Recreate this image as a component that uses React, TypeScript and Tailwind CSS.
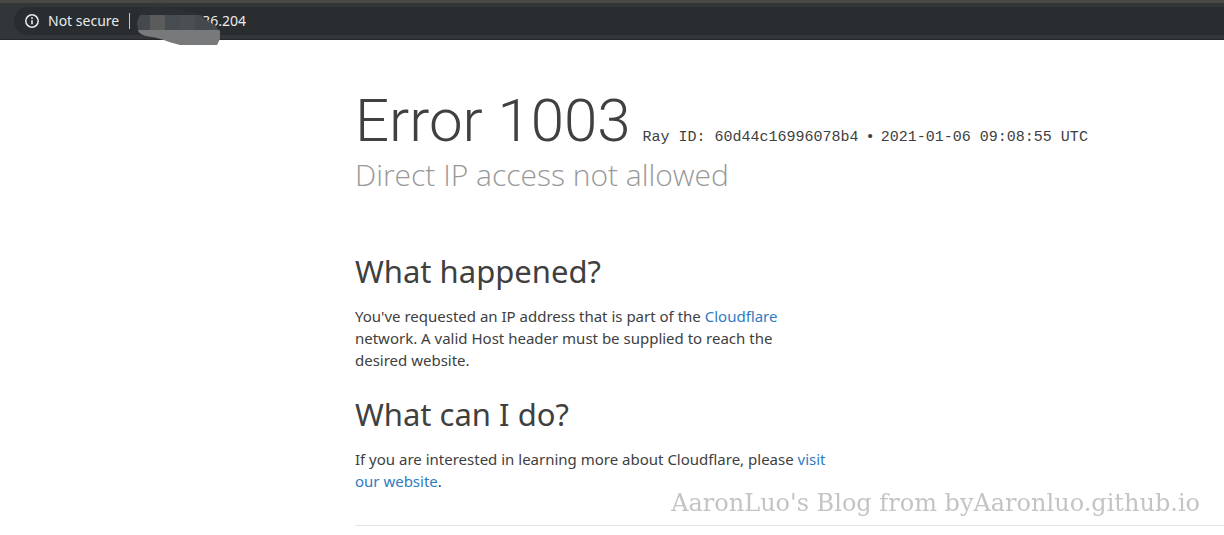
import React from 'react';

function AddressBar() {
  return (
    <header className="border-t-3 border-b border-t-[#4a4845] border-b-[#25272a] bg-[#323639] py-1 pl-3.5 font-['Noto_Sans',sans-serif] text-sm text-[#e8eaed]">
      <div className="relative flex h-7 items-center rounded-l-full bg-[#292d30] pl-2.5">
        <button type="button" className="flex items-center gap-2">
          <svg viewBox="0 0 16 16" className="size-4" fill="none" stroke="currentColor" strokeWidth="1.5" aria-hidden="true">
            <circle cx="8" cy="8" r="6.2" />
            <path d="M8 7.2v4M8 4.3v1.6" strokeWidth="1.6" />
          </svg>
          <span>Not secure</span>
        </button>
        <span className="ml-2.5 h-4 w-px bg-[#c4c6c8]" />
        <input
          type="text"
          aria-label="Address"
          defaultValue="36.204"
          className="ml-18 min-w-0 flex-1 bg-transparent outline-none"
        />
        <svg viewBox="0 0 84 38" className="absolute top-0 left-[123px] h-[38px] w-[84px]" aria-hidden="true">
          <path d="M1 23H82L83 24V32L80 38H43C31 35 23 31 15 30C6 29 1 26 1 23Z" fill="#77797a" />
          <path d="M0 13C2 4 8 0 20 0C38 1 50 3 62 7C67 10 70 13 73 16C77 17 80 19 82 23H1Z" fill="#2d3032" />
          <path d="M3 8H13V23H1L0 15Z" fill="#43494c" />
          <path d="M13 8H28V23H13Z" fill="#5a5b5b" />
          <path d="M28 8H43V23H28Z" fill="#464c50" />
          <path d="M43 8H58V23H43Z" fill="#4b4f51" />
          <path d="M58 8H64C67 14 77 16 82 23H58Z" fill="#43494d" />
        </svg>
      </div>
    </header>
  );
}

function Section({ title, children }: { title: string; children: React.ReactNode }) {
  return (
    <section className="max-w-[473px]">
      <h2 className="text-[31px] leading-10">{title}</h2>
      <p className="mt-3.5 text-[15px] leading-[22px]">{children}</p>
    </section>
  );
}

export default function App() {
  return (
    <div className="min-h-screen bg-white">
      <AddressBar />
      <main className="ml-[29%] pt-12 font-['Noto_Sans',sans-serif] text-[#404040]">
        <header>
          <h1 className="flex items-baseline gap-3 whitespace-nowrap">
            <span className="font-['Roboto',sans-serif] text-[60px] leading-[66px] font-light">Error 1003</span>
            <span className="font-['Liberation_Mono',monospace] text-[15px]">
              Ray ID: 60d44c16996078b4 <span className="font-['Liberation_Sans',sans-serif]">•</span>
              <span className="ml-2">2021-01-06 09:08:55 UTC</span>
            </span>
          </h1>
          <p className="font-['Open_Sans',sans-serif] text-[30px] leading-[42px] font-light text-[#999]">
            Direct IP access not allowed
          </p>
        </header>
        <div className="mt-[55px] flex flex-col gap-[23px]">
          <Section title="What happened?">
            You've requested an IP address that is part of the{' '}
            <a href="#cloudflare" className="text-[#2f7bbf]">Cloudflare</a> network. A valid Host header must be supplied to
            reach the desired website.
          </Section>
          <Section title="What can I do?">
            If you are interested in learning more about Cloudflare, please{' '}
            <a href="#website" className="text-[#2f7bbf]">visit our website</a>.
          </Section>
        </div>
        <hr className="mt-[33px] border-[#e5e5e5]" />
      </main>
      <p className="fixed right-6 bottom-4 font-['DejaVu_Serif',serif] text-[24px] leading-8 whitespace-nowrap text-[#c4c4c4]">
        AaronLuo's Blog from byAaronluo.github.io
      </p>
    </div>
  );
}
